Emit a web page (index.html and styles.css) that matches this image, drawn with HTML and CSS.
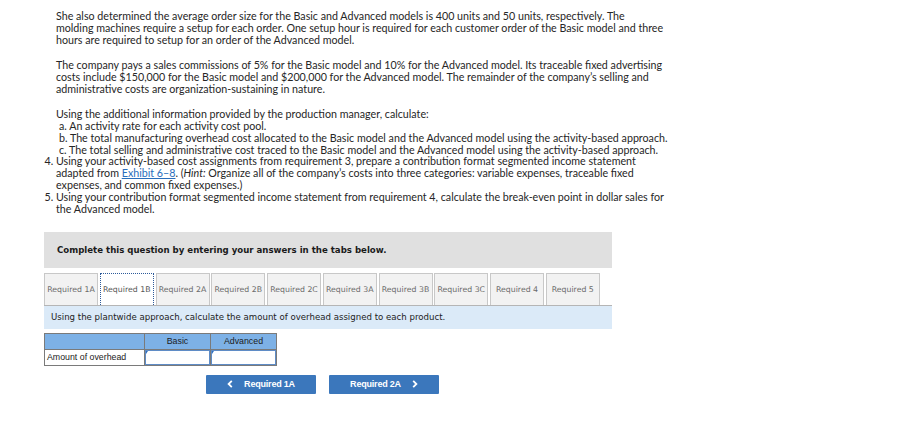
FILE: index.html
```html
<!DOCTYPE html>
<html>
<head>
<meta charset="utf-8">
<link rel="stylesheet" href="styles.css">
</head>
<body>
<div class="page">
  <div class="question">
    <p class="para">She also determined the average order size for the Basic and Advanced models is 400 units and 50 units, respectively. The<br>molding machines require a setup for each order. One setup hour is required for each customer order of the Basic model and three<br>hours are required to setup for an order of the Advanced model.</p>
    <p class="para">The company pays a sales commissions of 5% for the Basic model and 10% for the Advanced model. Its traceable fixed advertising<br>costs include $150,000 for the Basic model and $200,000 for the Advanced model. The remainder of the company’s selling and<br>administrative costs are organization-sustaining in nature.</p>
    <p class="para intro">Using the additional information provided by the production manager, calculate:</p>
    <ul class="sub">
      <li>a. An activity rate for each activity cost pool.</li>
      <li>b. The total manufacturing overhead cost allocated to the Basic model and the Advanced model using the activity-based approach.</li>
      <li>c. The total selling and administrative cost traced to the Basic model and the Advanced model using the activity-based approach.</li>
    </ul>
    <ol class="reqs" start="4">
      <li>Using your activity-based cost assignments from requirement 3, prepare a contribution format segmented income statement<br>adapted from <a class="link">Exhibit 6–8</a>. (<em>Hint:</em> Organize all of the company’s costs into three categories: variable expenses, traceable fixed<br>expenses, and common fixed expenses.)</li>
      <li>Using your contribution format segmented income statement from requirement 4, calculate the break-even point in dollar sales for<br>the Advanced model.</li>
    </ol>
  </div>

  <div class="panel">
    <div class="banner">Complete this question by entering your answers in the tabs below.</div>
    <div class="tabs">
      <div class="tab">Required 1A</div>
      <div class="tab active">Required 1B</div>
      <div class="tab">Required 2A</div>
      <div class="tab">Required 2B</div>
      <div class="tab">Required 2C</div>
      <div class="tab">Required 3A</div>
      <div class="tab">Required 3B</div>
      <div class="tab">Required 3C</div>
      <div class="tab">Required 4</div>
      <div class="tab">Required 5</div>
    </div>
    <div class="instr">Using the plantwide approach, calculate the amount of overhead assigned to each product.</div>
    <table class="grid">
      <tr class="head">
        <th class="label"></th>
        <th>Basic</th>
        <th>Advanced</th>
      </tr>
      <tr class="body">
        <td class="label">Amount of overhead</td>
        <td class="cell"><span class="inp"></span></td>
        <td class="cell"><span class="inp"></span></td>
      </tr>
    </table>
    <div class="nav">
      <div class="btn">
        <svg class="chev" width="6" height="8" viewBox="0 0 6 8"><path d="M4.8 0.8 L1.6 4 L4.8 7.2" fill="none" stroke="#fff" stroke-width="1.8"/></svg>
        Required 1A
      </div>
      <div class="btn">
        Required 2A
        <svg class="chev r" width="6" height="8" viewBox="0 0 6 8"><path d="M1.2 0.8 L4.4 4 L1.2 7.2" fill="none" stroke="#fff" stroke-width="1.8"/></svg>
      </div>
    </div>
  </div>
</div>
</body>
</html>
```

FILE: styles.css
```css
html, body {
  margin: 0;
  padding: 0;
  background: #ffffff;
}
.page {
  padding: 10px 0 0 44px;
  width: 660px;
}
.question {
  font-family: Lato, "Liberation Sans", sans-serif;
  font-size: 10.7px;
  line-height: 11.8px;
  color: #262626;
  white-space: nowrap;
}
.para {
  margin: 0 0 13.7px 12px;
}
.para.intro {
  margin-bottom: 0;
}
.sub {
  list-style: none;
  margin: 0;
  padding: 0 0 0 15px;
}
.reqs {
  margin: 0;
  padding: 0 0 0 12px;
}
.link {
  color: #2a6ebb;
  text-decoration: underline;
}
.panel {
  margin-top: 17.6px;
  width: 568px;
}
.banner {
  background: #e0e0e0;
  height: 36px;
  display: flex;
  align-items: center;
  padding-left: 13px;
  font-family: Verdana, "DejaVu Sans", sans-serif;
  font-weight: bold;
  font-size: 8.6px;
  color: #1a1a1a;
}
.tabs {
  display: flex;
  gap: 1.75px;
  margin-top: 5px;
  border-bottom: 1px solid #b5b5b5;
}
.tab {
  width: 52px;
  height: 31px;
  display: flex;
  align-items: center;
  justify-content: center;
  background: #f2f2f2;
  border: 1px solid #c8c8c8;
  border-bottom: none;
  font-family: Verdana, "DejaVu Sans", sans-serif;
  font-size: 7.8px;
  color: #6a6a6a;
  white-space: nowrap;
}
.tab.active {
  background: #ffffff;
  border: 1px dotted #2d5b9a;
  border-bottom: none;
  color: #555;
}
.instr {
  background: #dbeaf8;
  height: 23px;
  display: flex;
  align-items: center;
  padding-left: 7px;
  font-family: Verdana, "DejaVu Sans", sans-serif;
  font-size: 8.6px;
  color: #222;
}
.grid {
  margin-top: 4px;
  border-collapse: collapse;
  font-family: Arial, "Liberation Sans", sans-serif;
  font-size: 8.8px;
}
.grid th, .grid td {
  border: 1px solid #7a7a7a;
  padding: 0;
}
.grid .head th {
  background: #7db1e6;
  font-weight: normal;
  color: #1c1c1c;
  width: 65px;
  height: 15px;
}
.grid .head th.label {
  width: 99px;
}
.grid .body td {
  height: 15px;
}
.grid td.label {
  padding-left: 2px;
  color: #222;
}
.grid td.cell {
  padding: 0;
  position: relative;
}
.inp {
  display: block;
  height: 13px;
  border: 1px solid #5f8cc6;
  background: #fff;
}
.cell::before {
  content: "";
  position: absolute;
  left: 1px;
  top: 1px;
  border-top: 3px solid #2f6fc0;
  border-right: 2px solid transparent;
}
.nav {
  display: flex;
  gap: 13px;
  margin: 9px 0 0 162px;
}
.btn {
  width: 110px;
  height: 19px;
  background: #3b77bc;
  border-radius: 1px;
  color: #fff;
  font-family: Arial, "Liberation Sans", sans-serif;
  font-weight: bold;
  font-size: 9px;
  letter-spacing: -0.2px;
  display: flex;
  align-items: center;
  justify-content: center;
}
.chev {
  margin-right: 11px;
}
.chev.r {
  margin-right: 0;
  margin-left: 11px;
}
```
